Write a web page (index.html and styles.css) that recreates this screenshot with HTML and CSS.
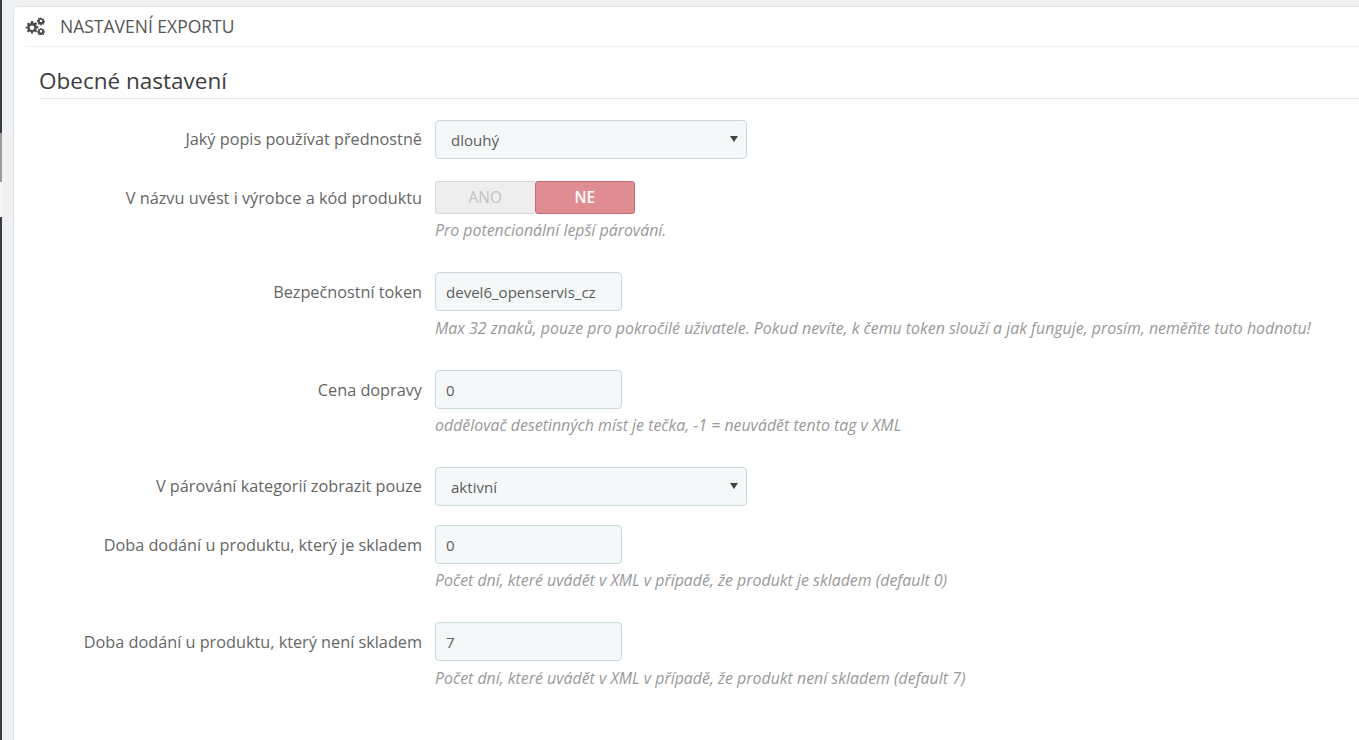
FILE: index.html
```html
<!DOCTYPE html>
<html lang="cs">
<head>
<meta charset="utf-8">
<title>Nastavení exportu</title>
<link rel="stylesheet" href="styles.css">
</head>
<body>
<div class="edge">
  <div class="edge-dark e1"></div>
  <div class="edge-gray"></div>
  <div class="edge-light"></div>
  <div class="edge-dark e2"></div>
</div>
<main class="page">
  <section class="panel">
    <header class="panel-heading">
      <svg class="cogs" viewBox="0 0 20 18" width="20" height="18" aria-hidden="true">
        <g fill="#4d4d4d">
          <path fill-rule="evenodd" d="M6.1 4h1.8l.4 1.6 1.1.5 1.4-.9 1.3 1.3-.9 1.4.5 1.1 1.6.4v1.8l-1.6.4-.5 1.1.9 1.4-1.3 1.3-1.4-.9-1.1.5-.4 1.6H6.1l-.4-1.6-1.1-.5-1.4.9-1.3-1.3.9-1.4-.5-1.1L.7 11.6V9.8l1.6-.4.5-1.1-.9-1.4 1.3-1.3 1.4.9 1.1-.5zM7 8.4a2.3 2.3 0 1 0 0 4.6 2.3 2.3 0 0 0 0-4.6z"/>
          <path fill-rule="evenodd" d="M15.4.6h1.2l.2 1 .7.3.9-.5.8.8-.5.9.3.7 1 .2v1.2l-1 .2-.3.7.5.9-.8.8-.9-.5-.7.3-.2 1h-1.2l-.2-1-.7-.3-.9.5-.8-.8.5-.9-.3-.7-1-.2V3.3l1-.2.3-.7-.5-.9.8-.8.9.5.7-.3zM16 2.7a1.2 1.2 0 1 0 0 2.4 1.2 1.2 0 0 0 0-2.4z"/>
          <path fill-rule="evenodd" d="M15.4 10.9h1.2l.2 1 .7.3.9-.5.8.8-.5.9.3.7 1 .2v1.2l-1 .2-.3.7.5.9-.8.8-.9-.5-.7.3-.2 1h-1.2l-.2-1-.7-.3-.9.5-.8-.8.5-.9-.3-.7-1-.2v-1.2l1-.2.3-.7-.5-.9.8-.8.9.5.7-.3zM16 13a1.2 1.2 0 1 0 0 2.4 1.2 1.2 0 0 0 0-2.4z"/>
        </g>
      </svg>
      <span class="panel-title">NASTAVENÍ EXPORTU</span>
    </header>
    <div class="panel-body">
      <h3 class="section-title">Obecné nastavení</h3>
      <form class="form">
        <div class="row row-plain">
          <div class="label">Jaký popis používat přednostně</div>
          <div class="field">
            <div class="control select">dlouhý<span class="caret"></span></div>
          </div>
        </div>
        <div class="row row-switch">
          <div class="label">V názvu uvést i výrobce a kód produktu</div>
          <div class="field">
            <div class="switch">
              <span class="switch-off">ANO</span>
              <span class="switch-on">NE</span>
            </div>
            <p class="help help-switch">Pro potencionální lepší párování.</p>
          </div>
        </div>
        <div class="row row-tall">
          <div class="label">Bezpečnostní token</div>
          <div class="field">
            <div class="control input">devel6_openservis_cz</div>
            <p class="help">Max 32 znaků, pouze pro pokročilé uživatele. Pokud nevíte, k čemu token slouží a jak funguje, prosím, neměňte tuto hodnotu!</p>
          </div>
        </div>
        <div class="row">
          <div class="label">Cena dopravy</div>
          <div class="field">
            <div class="control input">0</div>
            <p class="help help-tight">oddělovač desetinných míst je tečka, -1 = neuvádět tento tag v XML</p>
          </div>
        </div>
        <div class="row row-plain">
          <div class="label">V párování kategorií zobrazit pouze</div>
          <div class="field">
            <div class="control select">aktivní<span class="caret"></span></div>
          </div>
        </div>
        <div class="row">
          <div class="label">Doba dodání u produktu, který je skladem</div>
          <div class="field">
            <div class="control input">0</div>
            <p class="help help-tight">Počet dní, které uvádět v XML v případě, že produkt je skladem (default 0)</p>
          </div>
        </div>
        <div class="row">
          <div class="label">Doba dodání u produktu, který není skladem</div>
          <div class="field">
            <div class="control input">7</div>
            <p class="help">Počet dní, které uvádět v XML v případě, že produkt není skladem (default 7)</p>
          </div>
        </div>
      </form>
    </div>
  </section>
</main>
</body>
</html>
```
FILE: styles.css
```css
* { box-sizing: border-box; }
html, body { height: 100%; margin: 0; overflow: hidden; }
body {
  display: flex;
  background: #eff1f2;
  font-family: "Open Sans", sans-serif;
  font-size: 16.25px;
  color: #666;
}
.edge { width: 1.5px; flex: none; display: flex; flex-direction: column; }
.edge-dark { background: #3a3d42; }
.e1 { height: 133px; }
.edge-gray { height: 49px; background: #9a9b9d; }
.edge-light { height: 35px; background: #f3f4f5; }
.e2 { flex: 1; }
.page { flex: 1; min-width: 0; padding: 6px 0 0 11.5px; }
.panel {
  height: 760px;
  background: #fff;
  border: 1px solid #e2e4e6;
  border-right: 0;
  border-radius: 5px 0 0 0;
  padding: 0 0 0 10.5px;
}
.panel-heading {
  height: 40px;
  padding-bottom: 1px;
  display: flex;
  align-items: center;
  border-bottom: 1px solid #eeeff0;
}
.cogs { flex: none; margin-right: 15.5px; }
.panel-title { font-size: 17.5px; color: #555; }
.panel-body { padding: 0 0 0 14.5px; }
.section-title {
  margin: 18.5px 0 21px;
  height: 33.5px;
  border-bottom: 1px solid #e4e6e8;
  font-size: 22.5px;
  font-weight: 400;
  line-height: 29px;
  color: #3d3d3d;
}
.row { display: flex; height: 97px; }
.row-tall { height: 98px; }
.row-plain { height: 58px; }
.row-plain:first-child { height: 61px; }
.row-switch { height: 91px; }
.label {
  width: 383px;
  flex: none;
  text-align: right;
  line-height: 40px;
  white-space: nowrap;
  color: #666;
}
.row-plain .label { line-height: 39px; }
.row-switch .label { line-height: 34px; }
.field { margin-left: 13px; flex: 1; min-width: 0; }
.control {
  height: 39px;
  background: #f5f8f9;
  border: 1px solid #c9d8dc;
  border-radius: 4px;
  padding-left: 15px;
  line-height: 39px;
  font-size: 15.05px;
  color: #5c5c5c;
}
.select { width: 312px; position: relative; }
.input { width: 187px; padding-left: 10px; }
.caret {
  position: absolute;
  right: 8px;
  top: 15px;
  border: 4px solid transparent;
  border-top: 6px solid #444;
  border-bottom: 0;
}
.switch { display: flex; width: 200px; height: 33px; font-size: 15.4px; font-weight: 600; }
.switch-off, .switch-on { flex: 1; text-align: center; line-height: 32px; }
.switch-off {
  background: #eee;
  border: 1px solid #d8d8d8;
  border-right: 0;
  border-radius: 3px 0 0 3px;
  color: #c2c2c2;
  font-weight: 400;
}
.switch-on {
  background: #e08c93;
  border: 1px solid #c46d74;
  border-radius: 3px;
  color: #fff;
}
.help {
  margin: 7px 0 0;
  font-size: 15.9px;
  line-height: 20px;
  font-style: italic;
  color: #999;
  white-space: nowrap;
}
.help-switch { margin-top: 6px; }
.help-tight { margin-top: 6px; }
```
